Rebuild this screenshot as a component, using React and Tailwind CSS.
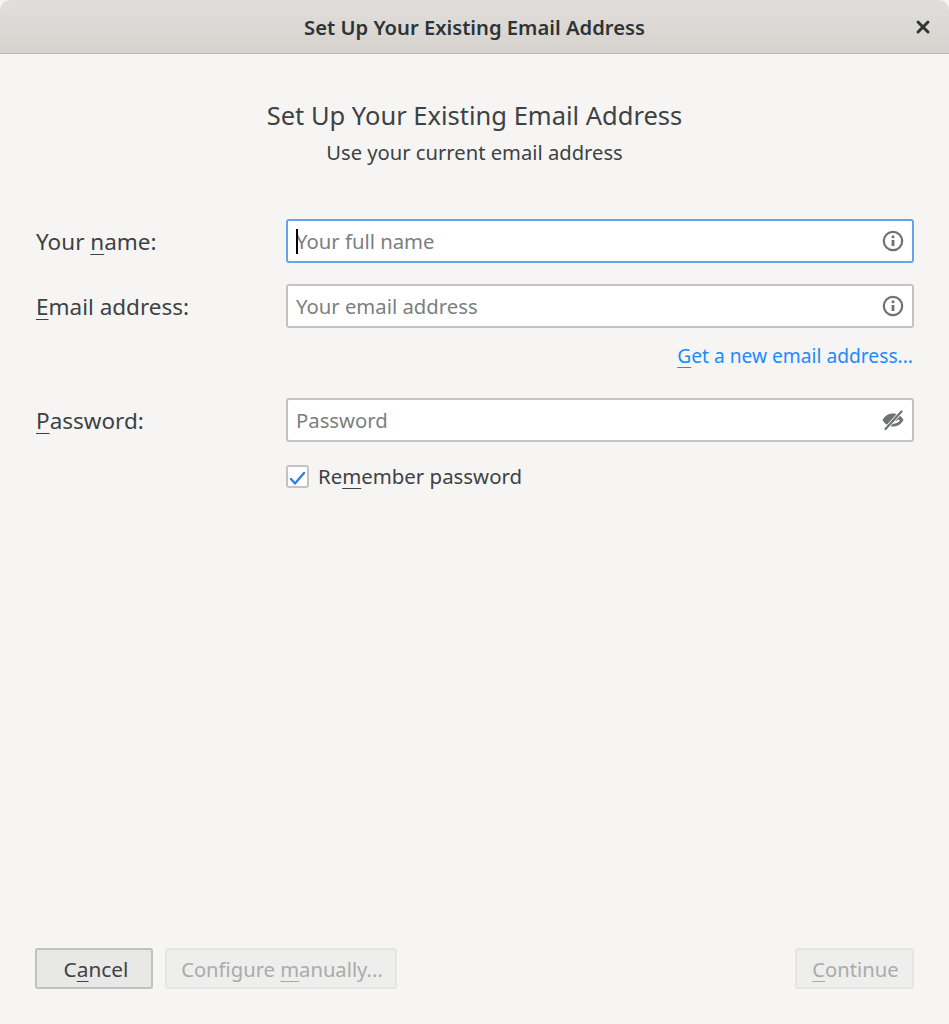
import { X } from "lucide-react";

const InfoIcon = () => (
  <svg className="w-[22px] h-[22px] text-[#6f7172]" viewBox="0 0 22 22" fill="none">
    <circle cx="11" cy="11" r="9.2" stroke="currentColor" strokeWidth="2.2" />
    <circle cx="11" cy="6.8" r="1.5" fill="currentColor" />
    <path d="M11 10v6" stroke="currentColor" strokeWidth="2.8" />
  </svg>
);

const EyeOff = () => (
  <svg className="w-[22px] h-[22px] text-[#6f7172]" viewBox="0 0 22 22" fill="none">
    <path d="M0.5 11C3 6.5 6.8 4.5 11 4.5S19 6.5 21.5 11C19 15.5 15.2 17.5 11 17.5S3 15.5 0.5 11z" fill="currentColor" />
    <path d="M16.5 10.5c.8.3 1.2.5 1.7.8-1.8 2.2-4.200 3.500-7.200 3.500-.6 0-1.100 0-1.600-.1z" fill="#ffffff" />
    <path d="M3.5 20 19.5 2.5" stroke="#ffffff" strokeWidth="3.8" />
    <path d="M3.5 20 19.5 2.5" stroke="currentColor" strokeWidth="2.2" strokeLinecap="round" />
  </svg>
);

const Key = ({ children }) => (
  <span className="underline decoration-1 underline-offset-[4px]">{children}</span>
);

const Field = ({ label, placeholder, icon, focused, className = "" }) => (
  <div className={`flex items-center ${className}`}>
    <label className="w-[251px] pl-[1px] pt-[2px] text-[22.5px] text-[#3d4244]">{label}</label>
    <div
      className={`relative flex-1 h-[44px] flex items-center bg-white rounded-[3px] border-2 ${
        focused ? "border-[#64a2f2]" : "border-[#c3c3c1]"
      }`}
    >
      <input
        placeholder={placeholder}
        className="flex-1 min-w-0 h-full pl-[8px] text-[20.3px] bg-transparent outline-none placeholder:text-[#7c7f80]"
      />
      {focused && <span className="absolute left-[8px] top-[8px] w-[2px] h-[25px] bg-black" />}
      <span className="w-[38px] flex justify-center">{icon}</span>
    </div>
  </div>
);

const App = () => {
  return (
    <div className="w-[949px] h-[1024px] flex flex-col bg-[#f6f5f4] text-[#3d4244] text-[20px] leading-[28px] font-['Noto_Sans','Open_Sans',sans-serif]">
      <header className="relative h-[54px] shrink-0 flex items-center justify-center rounded-t-[10px] border-b border-[#bfb8b1] bg-gradient-to-b from-[#e1dedb] to-[#d6d3cf]">
        <h1 className="text-[20.2px] font-semibold text-[#2e3436]">Set Up Your Existing Email Address</h1>
        <X className="absolute right-[16px] top-[17px] w-[20px] h-[20px] text-[#2e3436]" strokeWidth={3.5} />
      </header>

      <main className="flex-1 flex flex-col px-[35px] pt-[46px] pb-[35px]">
        <div className="text-center">
          <h2 className="text-[25.5px] leading-[30px]">Set Up Your Existing Email Address</h2>
          <p className="mt-[8px] text-[20.2px]">Use your current email address</p>
        </div>

        <form className="mt-[53px] flex flex-col">
          <Field label={<>Your <Key>n</Key>ame:</>} placeholder="Your full name" icon={<InfoIcon />} focused />
          <Field className="mt-[21px]" label={<><Key>E</Key>mail address:</>} placeholder="Your email address" icon={<InfoIcon />} />
          <div className="mt-[14px] pr-[1px] text-right text-[19.2px] text-[#1a8cff]">
            <a><Key>G</Key>et a new email address...</a>
          </div>
          <Field className="mt-[28px]" label={<><Key>P</Key>assword:</>} placeholder="Password" icon={<EyeOff />} />
          <div className="mt-[20px] ml-[251px] flex items-center gap-[9px]">
            <span className="w-[23px] h-[23px] flex items-center justify-center bg-white rounded-[3px] border-2 border-[#c3c3c1]">
              <svg className="w-[19px] h-[19px] text-[#2f80ed]" viewBox="0 0 19 19" fill="none">
                <path d="M3 12l4 4.5L16 6" stroke="currentColor" strokeWidth="2.4" strokeLinecap="round" strokeLinejoin="round" />
              </svg>
            </span>
            <span className="text-[20.4px]">Re<Key>m</Key>ember password</span>
          </div>
        </form>

        <footer className="mt-auto flex items-center gap-[12px]">
          <button className="w-[118px] h-[41px] pl-[4px] rounded-[3px] border-2 border-[#c0c0be] bg-[#e8e8e7] text-[20.8px] text-[#3d4244]">
            C<Key>a</Key>ncel
          </button>
          <button disabled className="w-[232px] h-[41px] pl-[2px] rounded-[3px] border-2 border-[#e6e5e4] bg-[#eeeeed] text-[20.2px] text-[#a9abab]">
            Configure <Key>m</Key>anually...
          </button>
          <button disabled className="ml-auto w-[119px] h-[41px] pl-[2px] rounded-[3px] border-2 border-[#e6e5e4] bg-[#eeeeed] text-[20.2px] text-[#a9abab]">
            <Key>C</Key>ontinue
          </button>
        </footer>
      </main>
    </div>
  );
};

export default App;
